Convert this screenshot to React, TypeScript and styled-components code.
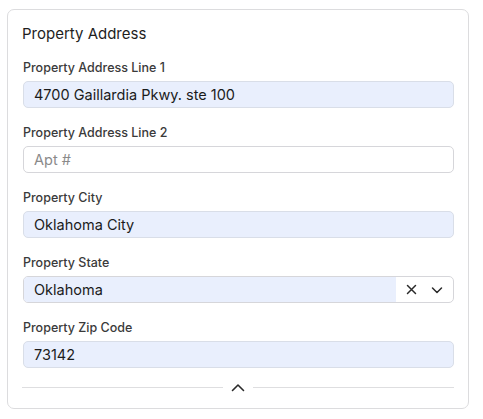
import React from 'react';
import styled, { createGlobalStyle } from 'styled-components';

const GlobalStyle = createGlobalStyle`
  html, body {
    margin: 0;
    padding: 0;
    background: #ffffff;
    font-family: Inter, "Liberation Sans", sans-serif;
    color: #1f1f1f;
  }
  * { box-sizing: border-box; }
`;

const Page = styled.div`
  padding: 9px 14px 0 7px;
`;

const Card = styled.section`
  width: 462px;
  border: 1px solid #dcdcde;
  border-radius: 7px;
  padding: 14px 14px 13px 14px;
  background: #fff;
`;

const Title = styled.h2`
  margin: 0 0 16px 0;
  font-size: 15px;
  line-height: 20px;
  font-weight: 400;
  color: #1e1e1e;
`;

const Fields = styled.div`
  display: flex;
  flex-direction: column;
  gap: 17px;
`;

const Field = styled.div`
  display: flex;
  flex-direction: column;
`;

const Label = styled.label`
  font-size: 12.5px;
  line-height: 16px;
  font-weight: 500;
  color: #3a3a3a;
  margin: 0 0 5px 1px;
`;

const Input = styled.div<{ $filled?: boolean }>`
  height: 27px;
  margin-left: 1px;
  display: flex;
  align-items: center;
  padding: 0 10px;
  border: 1px solid ${p => (p.$filled ? '#d9dee8' : '#d6d6da')};
  border-radius: 5px;
  background: ${p => (p.$filled ? '#e9effd' : '#fff')};
  font-size: 14.5px;
  color: ${p => (p.$filled ? '#1b1b1b' : '#8a8a8a')};
`;

const Select = styled.div`
  height: 27px;
  margin-left: 1px;
  display: flex;
  border: 1px solid #d6d6da;
  border-radius: 5px;
  overflow: hidden;
`;

const SelectValue = styled.div`
  flex: 1;
  display: flex;
  align-items: center;
  padding: 0 10px;
  background: #e9effd;
  font-size: 14.5px;
  color: #1b1b1b;
`;

const SelectActions = styled.div`
  width: 57px;
  display: flex;
  align-items: center;
  justify-content: space-between;
  padding: 0 10px 0 10px;
  color: #333;
`;

const Divider = styled.div`
  margin-top: 11px;
  height: 16px;
  display: flex;
  align-items: center;
  gap: 8px;
  &::before, &::after {
    content: '';
    flex: 1;
    height: 1px;
    background: #dedee0;
  }
`;

const XIcon = () => (
  <svg width="11" height="11" viewBox="0 0 11 11" fill="none" stroke="#2a2a2a" strokeWidth="1.5" strokeLinecap="round">
    <path d="M1.5 1.5l8 8M9.5 1.5l-8 8" />
  </svg>
);

const ChevronDown = () => (
  <svg width="12" height="8" viewBox="0 0 12 8" fill="none" stroke="#2a2a2a" strokeWidth="1.5" strokeLinecap="round" strokeLinejoin="round">
    <path d="M1.5 2l4.5 4.5L10.5 2" />
  </svg>
);

const ChevronUp = () => (
  <svg width="14" height="9" viewBox="0 0 14 9" fill="none" stroke="#2a2a2a" strokeWidth="1.6" strokeLinecap="round" strokeLinejoin="round">
    <path d="M1.5 7.5L7 2l5.5 5.5" />
  </svg>
);

export default function App() {
  return (
    <>
      <GlobalStyle />
      <Page>
        <Card>
          <Title>Property Address</Title>
          <Fields>
            <Field>
              <Label>Property Address Line 1</Label>
              <Input $filled>4700 Gaillardia Pkwy. ste 100</Input>
            </Field>
            <Field>
              <Label>Property Address Line 2</Label>
              <Input>Apt #</Input>
            </Field>
            <Field>
              <Label>Property City</Label>
              <Input $filled>Oklahoma City</Input>
            </Field>
            <Field>
              <Label>Property State</Label>
              <Select>
                <SelectValue>Oklahoma</SelectValue>
                <SelectActions>
                  <XIcon />
                  <ChevronDown />
                </SelectActions>
              </Select>
            </Field>
            <Field>
              <Label>Property Zip Code</Label>
              <Input $filled>73142</Input>
            </Field>
          </Fields>
          <Divider>
            <ChevronUp />
          </Divider>
        </Card>
      </Page>
    </>
  );
}
